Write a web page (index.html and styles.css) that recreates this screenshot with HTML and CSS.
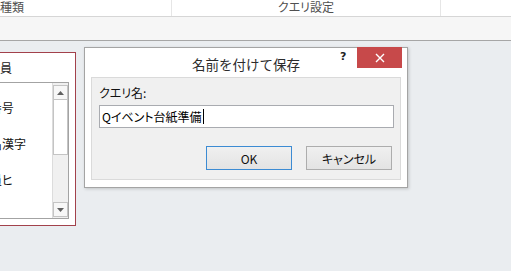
FILE: index.html
```html
<!DOCTYPE html>
<html lang="ja">
<head>
<meta charset="utf-8">
<link rel="stylesheet" href="styles.css">
</head>
<body>
<div class="header">
  <div class="hcell hleft">種類</div>
  <div class="hcell hmid">クエリ設定</div>
  <div class="hcell"></div>
</div>
<div class="band"></div>
<div class="workspace">
  <div class="fieldlist">
    <div class="fl-title">社員</div>
    <div class="listbox">
      <div class="items">
        <div class="item">ID</div>
        <div class="item">ID番号</div>
        <div class="item">No</div>
        <div class="item">氏名漢字</div>
        <div class="item">年</div>
        <div class="item">社員ヒ</div>
        <div class="item">性</div>
      </div>
      <div class="scrollbar">
        <div class="sb-btn"><svg width="7" height="4" viewBox="0 0 7 4"><path d="M0 4 L3.5 0 L7 4 Z" fill="#606060"/></svg></div>
        <div class="sb-thumb"></div>
        <div class="sb-track"></div>
        <div class="sb-btn"><svg width="7" height="4" viewBox="0 0 7 4"><path d="M0 0 L3.5 4 L7 0 Z" fill="#606060"/></svg></div>
      </div>
    </div>
  </div>

  <div class="dialog">
    <div class="titlebar">
      <span class="title">名前を付けて保存</span>
      <span class="help">?</span>
      <div class="close"><svg width="10" height="10" viewBox="0 0 10 10"><path d="M1 1 L9 9 M9 1 L1 9" stroke="#fff" stroke-width="1.4"/></svg></div>
    </div>
    <div class="panel">
      <div class="label">クエリ名:</div>
      <div class="input"><span>Qイベント台紙準備</span><span class="caret"></span></div>
      <div class="buttons">
        <div class="btn btn-default">OK</div>
        <div class="btn">キャンセル</div>
      </div>
    </div>
  </div>
</div>
</body>
</html>
```
FILE: styles.css
```css
* { box-sizing: border-box; }
html, body { margin: 0; padding: 0; }
body {
  width: 511px;
  height: 271px;
  overflow: hidden;
  background: #eaedf0;
  font-family: "Noto Sans CJK JP", "Noto Sans", sans-serif;
  font-feature-settings: "palt";
  font-size: 12px;
  color: #000;
}
.header {
  height: 17px;
  background: #fff;
  border-bottom: 1px solid #d6d6d6;
  display: grid;
  grid-template-columns: 172px 269px 1fr;
}
.hcell {
  border-right: 1px solid #e6e6e6;
  line-height: 14px;
  color: #505050;
  font-size: 12px;
}
.hcell:last-child { border-right: none; }
.hleft { padding-left: 0; }
.hmid { text-align: center; }
.band {
  height: 24px;
  background: #f6f6f6;
  border-bottom: 1px solid #a6a6a6;
}
.workspace {
  position: relative;
  height: 230px;
}
.fieldlist {
  position: absolute;
  left: -30px;
  top: 11px;
  width: 106px;
  height: 174px;
  background: #fff;
  border: 1px solid #a2414b;
}
.fl-title {
  height: 29px;
  padding-left: 17px;
  line-height: 30px;
  font-size: 12px;
  color: #222;
}
.listbox {
  margin-left: 5px;
  width: 93px;
  height: 137px;
  border: 1px solid #a3a3a3;
  display: flex;
  overflow: hidden;
}
.items {
  flex: 1;
  padding-left: 1px;
  overflow: hidden;
}
.item {
  height: 18px;
  line-height: 18px;
  font-size: 12px;
  white-space: nowrap;
  color: #111;
}
.item:first-child { margin-top: -2px; }
.scrollbar {
  width: 16px;
  display: flex;
  flex-direction: column;
  background: #f0f0f0;
  border-left: 1px solid #dcdcdc;
  padding: 2px 0 1px 0;
}
.sb-btn {
  height: 15px;
  border: 1px solid #c4c4c4;
  background: #f7f7f7;
  display: flex;
  align-items: center;
  justify-content: center;
}
.sb-thumb {
  height: 55px;
  background: #fff;
  border: 1px solid #c4c4c4;
  border-top: none;
}
.sb-track { flex: 1; }

.dialog {
  position: absolute;
  left: 84px;
  top: 6px;
  width: 324px;
  height: 141px;
  background: #fff;
  border: 1px solid #a4a4a4;
  box-shadow: 1px 1px 3px rgba(0,0,0,0.18);
  display: flex;
  flex-direction: column;
}
.titlebar {
  position: relative;
  height: 29px;
  display: flex;
  align-items: center;
  justify-content: center;
}
.title {
  font-size: 13.5px;
  color: #2b2b2b;
  font-feature-settings: normal;
  padding-top: 2px;
}
.help {
  position: absolute;
  left: 255px;
  top: 3px;
  line-height: 12px;
  font-family: "DejaVu Sans", sans-serif;
  font-weight: bold;
  font-size: 11px;
  color: #222;
}
.close {
  position: absolute;
  right: 5px;
  top: -1px;
  width: 45px;
  height: 21px;
  background: #c7494a;
  display: flex;
  align-items: center;
  justify-content: center;
}
.panel {
  flex: 1;
  margin: 0 6px 7px 6px;
  background: #f0f0f0;
  border: 1px solid #dadada;
  padding: 7px 8px 0 7px;
}
.label {
  height: 16px;
  line-height: 16px;
  font-size: 12px;
  color: #111;
}
.input {
  margin-top: 4px;
  width: 295px;
  height: 23px;
  background: #fff;
  border: 1px solid #a9abb0;
  display: flex;
  align-items: center;
  padding-left: 2px;
  font-size: 12px;
}
.caret {
  display: inline-block;
  width: 1px;
  height: 15px;
  background: #000;
  margin-left: 1px;
}
.buttons {
  margin-top: 18px;
  display: flex;
  justify-content: flex-end;
  gap: 14px;
}
.btn {
  width: 86px;
  height: 24px;
  border: 1px solid #adadad;
  background: linear-gradient(#f0f0f0, #e3e3e3);
  display: flex;
  align-items: center;
  justify-content: center;
  font-size: 12px;
  color: #111;
}
.btn-default {
  border-color: #3c8bd3;
}
```
